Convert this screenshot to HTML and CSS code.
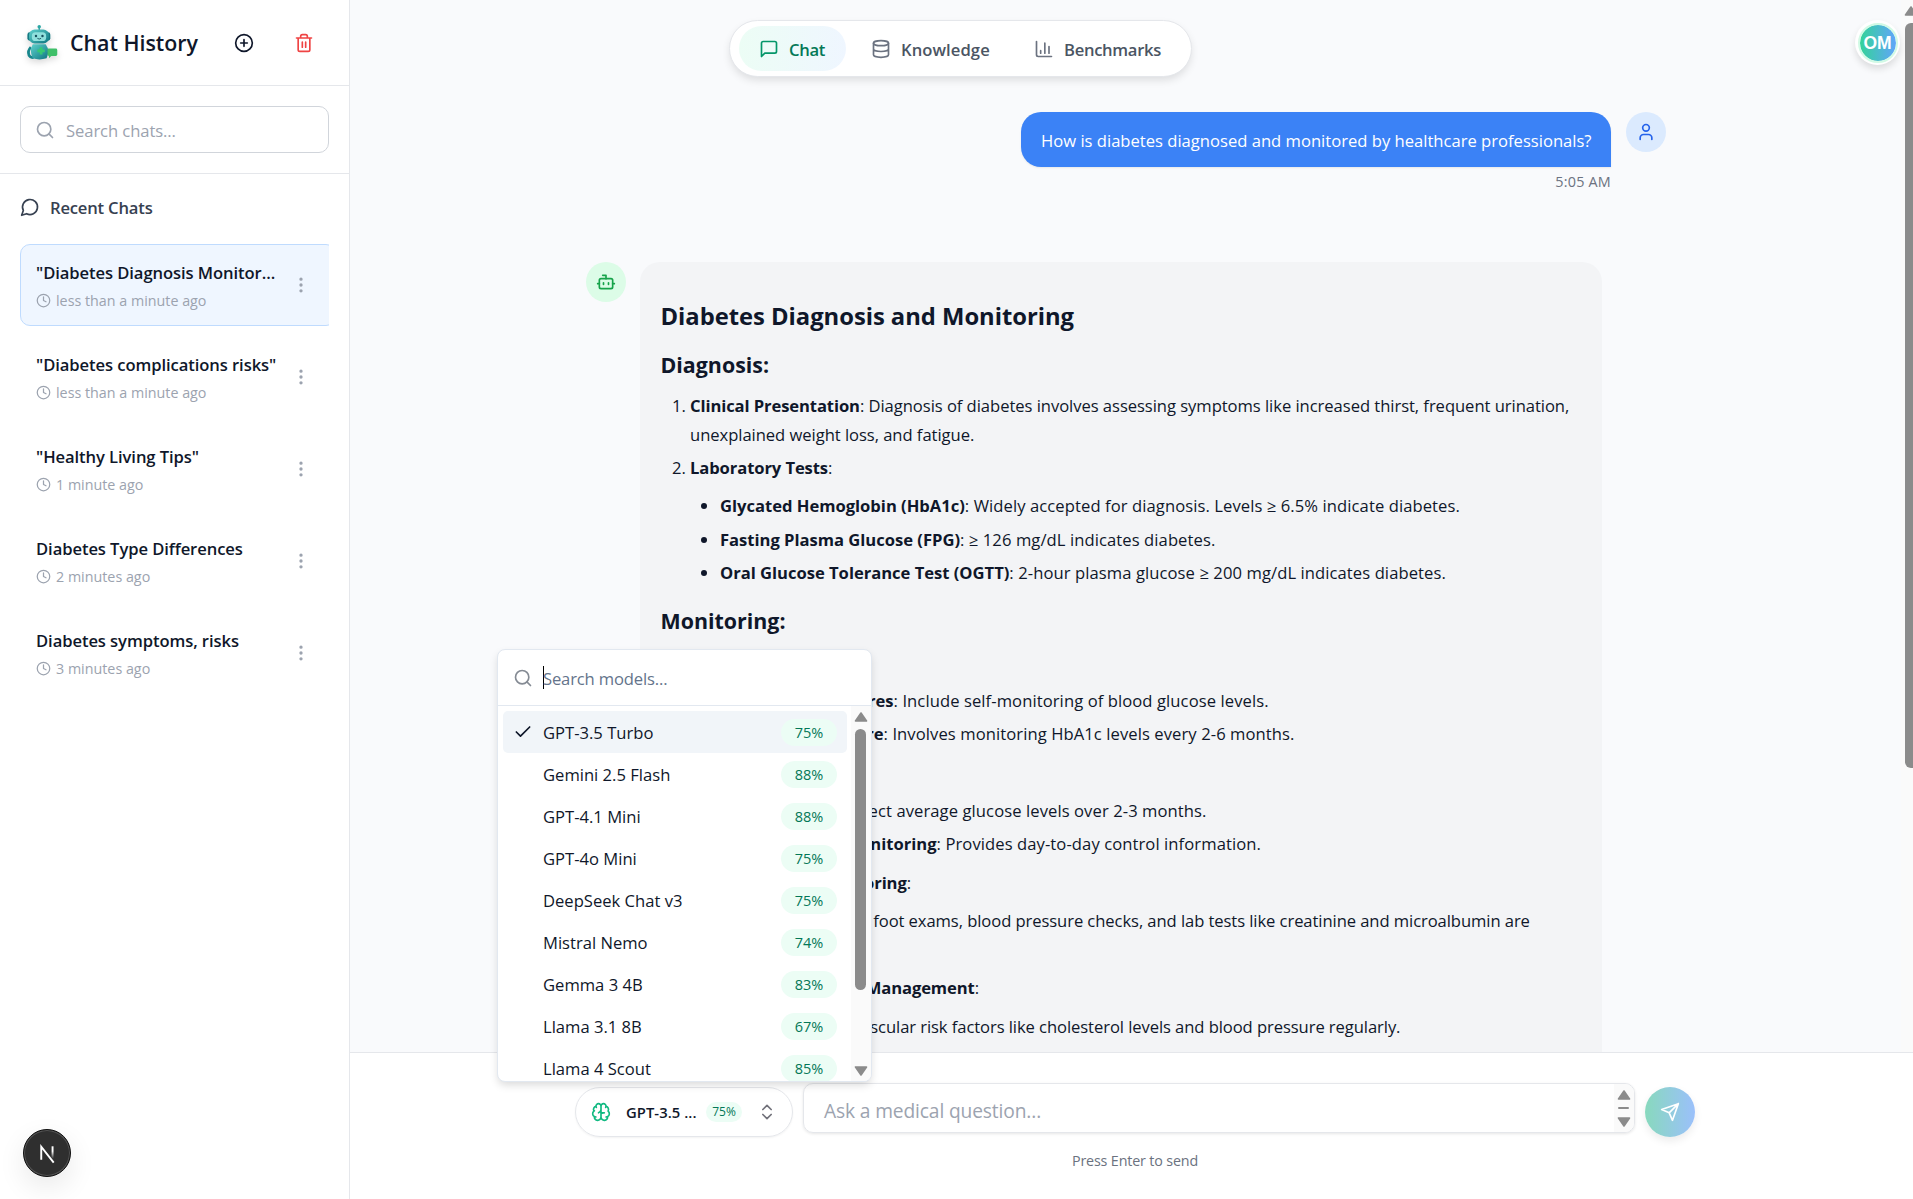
FILE: index.html
```html
<!DOCTYPE html>
<html lang="en">
<head>
<meta charset="utf-8">
<title>Chat History</title>
<link rel="stylesheet" href="styles.css">
</head>
<body>
<svg class="defs" width="0" height="0">
  <symbol id="search" viewBox="0 0 24 24"><circle cx="11" cy="11" r="8"/><path d="m21 21-4.3-4.3"/></symbol>
  <symbol id="clock" viewBox="0 0 24 24"><circle cx="12" cy="12" r="10"/><path d="M12 6v6l4 2"/></symbol>
  <symbol id="dots" viewBox="0 0 24 24"><circle cx="12" cy="12" r="1"/><circle cx="12" cy="5" r="1"/><circle cx="12" cy="19" r="1"/></symbol>
  <symbol id="up" viewBox="0 0 14 10"><path d="M7 1 12.5 9h-11z" fill="#8b8b8b" stroke="#8b8b8b" stroke-width="1.6" stroke-linejoin="round"/></symbol>
</svg>
<div class="app">
  <aside class="sidebar">
    <header class="side-head">
      <svg class="logo" viewBox="0 0 36 40">
        <defs>
          <linearGradient id="teal" x1="0" y1="0" x2="1" y2="1"><stop offset="0" stop-color="#5ed0cb"/><stop offset="1" stop-color="#0d7681"/></linearGradient>
        </defs>
        <path d="M15 7V3" stroke="#218f93" stroke-width="1.4"/><circle cx="15" cy="3" r="1.9" fill="#2aa7a5"/>
        <rect x="2.2" y="9" width="5" height="9" rx="2.5" fill="#147a83"/><rect x="22" y="9" width="5" height="9" rx="2.5" fill="#147a83"/>
        <rect x="4" y="6" width="21.500" height="15" rx="6" fill="url(#teal)"/>
        <rect x="7" y="9" width="15.500" height="9.500" rx="4" fill="#8fe0dc"/>
        <circle cx="11.500" cy="13" r="1.300" fill="#17505e"/><circle cx="18.500" cy="13" r="1.300" fill="#17505e"/><path d="M13 15.500q2 1.600 4 0" stroke="#17505e" fill="none"/>
        <path d="M6 25q-4 4-2 9 2 3 5 2" fill="none" stroke="#17868c" stroke-width="3"/>
        <path d="M8 22h14q5 7 1 15-8 2.500-15 0-4-8 0-15z" fill="url(#teal)"/>
        <path d="M17 25v8M13 29h8" stroke="#35c973" stroke-width="3"/>
        <path d="M25 26.500h8q1.500 0 1.500 1.500v5q0 1.500-1.500 1.500h-5l-2.500 2.500v-2.500q-1.500 0-1.500-1.500V28q0-1.500 1-1.500z" fill="#3fbf69"/>
      </svg>
      <h1>Chat History</h1>
      <svg class="ic add" viewBox="0 0 24 24"><circle cx="12" cy="12" r="10"/><path d="M8 12h8M12 8v8"/></svg>
      <svg class="ic trash" viewBox="0 0 24 24"><path d="M3 6h18M19 6v14c0 1-1 2-2 2H7c-1 0-2-1-2-2V6M8 6V4c0-1 1-2 2-2h4c1 0 2 1 2 2v2M10 11v6M14 11v6"/></svg>
    </header>
    <div class="side-search"><div class="search-box"><svg class="ic"><use href="#search"/></svg><span>Search chats...</span></div></div>
    <section class="recent">
      <h2><svg class="ic" viewBox="0 0 24 24"><path d="M7.900 20A9 9 0 1 0 4 16.100L2 22Z"/></svg>Recent Chats</h2>
      <ul class="chats">
        <li class="chat active"><div><b>"Diabetes Diagnosis Monitor...</b><span><svg class="ic"><use href="#clock"/></svg>less than a minute ago</span></div><svg class="ic more"><use href="#dots"/></svg></li>
        <li class="chat"><div><b>"Diabetes complications risks"</b><span><svg class="ic"><use href="#clock"/></svg>less than a minute ago</span></div><svg class="ic more"><use href="#dots"/></svg></li>
        <li class="chat"><div><b>"Healthy Living Tips"</b><span><svg class="ic"><use href="#clock"/></svg>1 minute ago</span></div><svg class="ic more"><use href="#dots"/></svg></li>
        <li class="chat"><div><b>Diabetes Type Differences</b><span><svg class="ic"><use href="#clock"/></svg>2 minutes ago</span></div><svg class="ic more"><use href="#dots"/></svg></li>
        <li class="chat"><div><b>Diabetes symptoms, risks</b><span><svg class="ic"><use href="#clock"/></svg>3 minutes ago</span></div><svg class="ic more"><use href="#dots"/></svg></li>
      </ul>
    </section>
  </aside>

  <main class="main">
    <div class="thread">
      <div class="msg user">
        <div class="col"><p class="bubble">How is diabetes diagnosed and monitored by healthcare professionals?</p><time>5:05 AM</time></div>
        <div class="who blue"><svg class="ic" viewBox="0 0 24 24"><circle cx="12" cy="7" r="4"/><path d="M19 21v-2a4 4 0 0 0-4-4H9a4 4 0 0 0-4 4v2"/></svg></div>
      </div>
      <div class="msg bot">
        <div class="who green"><svg class="ic" viewBox="0 0 24 24"><path d="M12 8V4H8"/><rect width="16" height="12" x="4" y="8" rx="2"/><path d="M2 14h2M20 14h2M15 13v2M9 13v2"/></svg></div>
        <article class="answer">
          <h2>Diabetes Diagnosis and Monitoring</h2>
          <h3>Diagnosis:</h3>
          <ol>
            <li><strong>Clinical Presentation</strong>: Diagnosis of diabetes involves assessing symptoms like increased thirst, frequent urination, unexplained weight loss, and fatigue.</li>
            <li><strong>Laboratory Tests</strong>:
              <ul>
                <li><strong>Glycated Hemoglobin (HbA1c)</strong>: Widely accepted for diagnosis. Levels ≥ 6.5% indicate diabetes.</li>
                <li><strong>Fasting Plasma Glucose (FPG)</strong>: ≥ 126 mg/dL indicates diabetes.</li>
                <li><strong>Oral Glucose Tolerance Test (OGTT)</strong>: 2-hour plasma glucose ≥ 200 mg/dL indicates diabetes.</li>
              </ul>
            </li>
          </ol>
          <h3 class="second">Monitoring:</h3>
          <ol>
            <li><strong>Goals</strong>:
              <ul>
                <li><span class="lead w1"><strong>Self-Care Measures</strong>:</span> Include self-monitoring of blood glucose levels.</li>
                <li><span class="lead w2"><strong>Professional Care</strong>:</span> Involves monitoring HbA1c levels every 2-6 months.</li>
              </ul>
            </li>
            <li><strong>Methods</strong>:
              <ul>
                <li><span class="lead w3"><strong>HbA1c Tests</strong>: Reflect</span> average glucose levels over 2-3 months.</li>
                <li><span class="lead w4"><strong>Blood Sugar Monitoring</strong>:</span> Provides day-to-day control information.</li>
              </ul>
            </li>
            <li><span class="lead w5"><strong>Clinical Monitoring</strong>:</span>
              <ul class="tight">
                <li><span class="lead w6">Annual eye and</span> foot exams, blood pressure checks, and lab tests like creatinine and microalbumin are<br>recommended.</li>
              </ul>
            </li>
            <li><span class="lead w7"><strong>Cardiovascular Risk Management</strong>:</span>
              <ul class="tight">
                <li><span class="lead w8">Assess cardiovascular</span> risk factors like cholesterol levels and blood pressure regularly.</li>
              </ul>
            </li>
          </ol>
        </article>
      </div>
    </div>
    <div class="page-track"><svg class="arrow"><use href="#up"/></svg><i></i></div>

    <footer class="composer">
      <div class="row">
        <div class="select">
          <svg class="ic brain" viewBox="0 0 24 24"><path d="M12 5a3 3 0 1 0-5.997.125 4 4 0 0 0-2.526 5.770 4 4 0 0 0 .556 6.588A4 4 0 1 0 12 18ZM12 5a3 3 0 1 1 5.997.125 4 4 0 0 1 2.526 5.770 4 4 0 0 1-.556 6.588A4 4 0 1 1 12 18ZM9 13a4.500 4.500 0 0 0 3-4M6 5.125A3 3 0 0 0 6.400 6.500M3.480 10.900a4 4 0 0 1 .580-.400M6 18a4 4 0 0 1-1.970-.520M12 13h4M12 13a4.500 4.500 0 0 0 3 0M18 5.125a3 3 0 0 1-.400 1.375M18 18a4 4 0 0 0 1.970-.520"/></svg>
          <b>GPT-3.5 ...</b><em>75%</em>
          <svg class="ic chev" viewBox="0 0 24 24"><path d="m7 15 5 5 5-5M7 9l5-5 5 5"/></svg>
        </div>
        <div class="ask"><span>Ask a medical question...</span><div class="mini"><svg class="arrow"><use href="#up"/></svg><i></i><svg class="arrow down"><use href="#up"/></svg></div></div>
        <div class="send"><svg class="ic" viewBox="0 0 24 24"><path d="M22 2 15 22l-4-9-9-4ZM22 2 11 13"/></svg></div>
      </div>
      <p>Press Enter to send</p>
    </footer>

    <nav class="tabs">
      <a class="on"><svg class="ic" viewBox="0 0 24 24"><path d="M21 15a2 2 0 0 1-2 2H7l-4 4V5a2 2 0 0 1 2-2h14a2 2 0 0 1 2 2z"/></svg><span>Chat</span></a>
      <a class="k"><svg class="ic" viewBox="0 0 24 24"><ellipse cx="12" cy="5" rx="9" ry="3"/><path d="M3 5v14a9 3 0 0 0 18 0V5M3 12a9 3 0 0 0 18 0"/></svg><span>Knowledge</span></a>
      <a class="m"><svg class="ic" viewBox="0 0 24 24"><path d="M3 3v16a2 2 0 0 0 2 2h16M18 17V9M13 17V5M8 17v-3"/></svg><span>Benchmarks</span></a>
    </nav>
    <div class="me"><span>OM</span></div>

    <div class="popup">
      <div class="find"><svg class="ic"><use href="#search"/></svg><i class="caret"></i><span>Search models...</span></div>
      <div class="scroll">
        <ul>
          <li class="sel"><svg class="ic" viewBox="0 0 24 24"><path d="M20 6 9 17l-5-5"/></svg><span>GPT-3.5 Turbo</span><em>75%</em></li>
          <li><span>Gemini 2.5 Flash</span><em>88%</em></li>
          <li><span>GPT-4.1 Mini</span><em>88%</em></li>
          <li><span>GPT-4o Mini</span><em>75%</em></li>
          <li><span>DeepSeek Chat v3</span><em>75%</em></li>
          <li><span>Mistral Nemo</span><em>74%</em></li>
          <li><span>Gemma 3 4B</span><em>83%</em></li>
          <li><span>Llama 3.1 8B</span><em>67%</em></li>
          <li><span>Llama 4 Scout</span><em>85%</em></li>
        </ul>
        <div class="track"><svg class="arrow"><use href="#up"/></svg><i></i><svg class="arrow down"><use href="#up"/></svg></div>
      </div>
    </div>
  </main>
</div>
<div class="dev"><svg viewBox="0 0 48 48"><defs><linearGradient id="fa" x1="0" y1="0" x2="0" y2="1"><stop offset=".4" stop-color="#fff"/><stop offset="1" stop-color="#fff" stop-opacity="0"/></linearGradient></defs><path d="M18 31V17.500L31 34" fill="none" stroke="#fff" stroke-width="2"/><rect x="28.800" y="17" width="2" height="13" fill="url(#fa)"/></svg></div>
</body>
</html>
```
FILE: styles.css
```css
* { box-sizing: border-box; margin: 0; padding: 0; }
body { width: 1913px; height: 1199px; overflow: hidden; background: #fff; color: #0f172a; font-family: "Open Sans", "Noto Sans", sans-serif; font-size: 16.6px; letter-spacing: 0; }
ul, ol { list-style: none; }
em { font-style: normal; }
.defs { position: absolute; }
.ic { width: 20px; height: 20px; flex: none; fill: none; stroke: currentColor; stroke-width: 2; stroke-linecap: round; stroke-linejoin: round; }
.arrow { width: 14px; height: 10px; flex: none; }
.down { transform: rotate(180deg); }
.app { display: grid; grid-template-columns: 350px 1fr; height: 1199px; }

.sidebar { border-right: 1px solid #e5e7eb; background: #fff; }
.side-head { height: 86px; display: flex; align-items: center; padding-left: 25px; border-bottom: 1px solid #e5e7eb; }
.logo { width: 34px; height: 37px; filter: drop-shadow(0 3px 3px rgba(0,0,0,.15)); }
.side-head h1 { width: 164px; margin-left: 11px; font-size: 21.4px; font-weight: 600; letter-spacing: -0.02px; white-space: nowrap; }
.trash { margin-left: 40px; color: #ef4444; }
.side-search { height: 88px; padding: 20px 20px 0; border-bottom: 1px solid #e5e7eb; }
.search-box { height: 47px; border: 1px solid #d1d5db; border-radius: 10px; display: flex; align-items: center; gap: 11px; padding-left: 14px; color: #9ca3af; }
.search-box span { padding-top: 1px; letter-spacing: -0.08px; }
.recent { padding: 20px 20px 0; overflow: hidden; }
.recent h2 { display: flex; align-items: center; gap: 10px; height: 26px; font-size: 16.6px; font-weight: 600; letter-spacing: -0.18px; color: #374151; }
.chats { margin-top: 24px; display: grid; gap: 10px; overflow: hidden; }
.chat { width: 316px; height: 82px; display: flex; align-items: center; border: 1px solid transparent; border-radius: 10px; padding: 0 18px 0 15px; }
.chat.active { background: #eff6ff; border-color: #bfdbfe; }
.chat div { flex: 1; display: grid; gap: 2px; padding-top: 2px; }
.chat b { font-weight: 600; line-height: 26px; letter-spacing: -0.08px; white-space: nowrap; }
.chat span { display: flex; align-items: center; gap: 5px; font-size: 14.3px; line-height: 25px; color: #9ca3af; }
.chat span .ic { width: 15px; height: 15px; }
.more { color: #9ca3af; margin-right: 6px; }

.main { position: relative; display: grid; grid-template-columns: 1fr 12px; grid-template-rows: 1052px 147px; background: #f9fafb; }
.thread { overflow: hidden; padding: 112px 235px 0 236px; background: #f9fafc; }
.msg { display: flex; }
.user { justify-content: flex-end; gap: 15px; height: 150px; }
.user .col { display: flex; flex-direction: column; align-items: flex-end; }
.bubble { width: 590px; height: 55px; line-height: 57px; padding-left: 20px; background: #3b82f6; color: #fff; border-radius: 20px 20px 0 20px; box-shadow: 0 1px 2px rgba(0,0,0,.08); white-space: nowrap; }
time { margin-top: 5px; font-size: 14.4px; line-height: 20px; letter-spacing: 0.2px; color: #6b7280; }
.who { width: 40px; height: 40px; flex: none; border-radius: 50%; display: grid; place-items: center; }
.blue { background: #dbeafe; color: #2563eb; }
.green { background: #dcfce7; color: #16a34a; }
.bot { gap: 14px; }
.answer { width: 962px; height: 900px; padding: 36px 16px 0 20.5px; border-radius: 20px; background: #f3f4f6; line-height: 28.3px; letter-spacing: -0.05px; }
.answer h2 { font-size: 23.8px; line-height: 36px; letter-spacing: -0.03px; }
.answer h3 { font-size: 21.4px; line-height: 32px; margin: 15px 0 11.4px; letter-spacing: 0; }
.answer h3.second { margin-top: 17.3px; }
.answer ol { list-style: decimal; padding-left: 29.5px; }
.answer ul { list-style: disc; padding-left: 30px; margin: 10px 0; letter-spacing: 0.08px; }
.answer ul.tight { letter-spacing: -0.08px; margin-top: 10.6px; }
.answer li { margin-bottom: 5.2px; }
.answer li li { white-space: nowrap; }
.lead { display: inline-block; text-align: right; white-space: nowrap; }
.w1 { width: 178px; } .w2 { width: 168px; } .w3 { width: 172px; } .w4 { width: 221px; }
.w5 { width: 221px; } .w6 { width: 149px; } .w7 { width: 289px; } .w8 { width: 196px; }
strong { font-weight: 700; letter-spacing: -0.1px; }
li li strong { letter-spacing: -0.02px; }
.page-track { background: #fafafa; overflow: hidden; padding: 6px 0 0 2px; }
.page-track i { display: block; width: 16px; height: 745px; margin: 7px 0 0 2px; border-radius: 6px; background: #8b8b8b; }
.page-track .arrow { display: block; margin-left: 1px; }

.composer { grid-column: 1 / -1; background: #fff; border-top: 1px solid #e5e7eb; padding: 30px 0 0 225px; }
.row { display: flex; align-items: flex-start; }
.select { width: 218px; height: 50px; margin-top: 4px; border: 1px solid #e5e7eb; border-radius: 25px; display: flex; align-items: center; padding-left: 15px; box-shadow: 0 1px 2px rgba(0,0,0,.05); }
.brain { color: #10b981; }
.select b { width: 80px; margin-left: 15px; font-weight: 600; font-size: 14.8px; letter-spacing: 0.05px; white-space: nowrap; }
.select em { width: 36px; height: 20px; border-radius: 10px; background: #ecfdf5; color: #047857; font-size: 12px; font-weight: 500; line-height: 20px; text-align: center; }
.chev { margin-left: 15px; color: #71717a; }
.ask { width: 832px; height: 50px; margin-left: 10px; border: 1px solid #e5e7eb; border-radius: 10px; display: flex; justify-content: space-between; overflow: hidden; box-shadow: 0 1px 3px rgba(0,0,0,.1); color: #9ca3af; font-size: 19.2px; line-height: 53px; padding-left: 20px; letter-spacing: -0.13px; }
.mini { width: 20px; background: #fafafa; display: flex; flex-direction: column; align-items: center; padding: 6px 1px 0 0; }
.mini i { width: 11px; height: 2px; margin: 7px 0 8px; background: #8b8b8b; border-radius: 1px; }
.send { width: 50px; height: 50px; margin: 4px 0 0 10px; border-radius: 50%; display: grid; place-items: center; color: #fff; background: linear-gradient(90deg, #88d9bd, #9bc0fb); box-shadow: 0 4px 8px rgba(0,0,0,.08); }
.composer p { width: 200px; margin: 13px 0 0 460px; line-height: 22px; text-align: center; font-size: 14.3px; color: #6b7280; letter-spacing: -0.15px; }

.tabs { position: absolute; left: 379px; top: 20px; width: 463px; height: 57px; border: 1px solid #e5e7eb; border-radius: 29px; background: #fff; display: flex; gap: 5px; padding: 5px 9px; box-shadow: 0 4px 8px -1px rgba(0,0,0,.12); }
.tabs a { height: 45px; display: flex; align-items: center; gap: 10px; padding-left: 20px; border-radius: 23px; font-weight: 600; letter-spacing: -0.3px; color: #4b5563; white-space: nowrap; }
.tabs span { padding-top: 1px; }
.tabs .ic { color: #6b7280; }
.tabs .on { width: 107px; color: #047857; background: linear-gradient(90deg, #ecfdf5, #eff6ff); }
.tabs .on .ic { color: #059669; }
.tabs .k { width: 158px; letter-spacing: 0.08px; }
.tabs .m { width: 166px; }
.me { position: absolute; left: 1505px; top: 20px; width: 45px; height: 45px; border-radius: 50%; background: #fff; padding: 2.5px; box-shadow: 0 4px 7px rgba(0,0,0,.12); }
.me span { display: grid; place-items: center; width: 40px; height: 40px; padding-top: 2px; border: 2px solid #d1fae5; border-radius: 50%; background: linear-gradient(90deg, #34d399, #60a5fa) padding-box; color: #fff; font: 700 17.5px "Liberation Sans", sans-serif; }

.popup { position: absolute; left: 147px; top: 649px; width: 375px; height: 433px; border: 1px solid #e2e8f0; border-radius: 8px; background: #fff; overflow: hidden; box-shadow: 0 4px 8px -1px rgba(0,0,0,.15); }
.find { height: 56px; display: flex; align-items: center; padding-left: 15px; border-bottom: 1px solid #e2e8f0; color: #64748b; }
.find .ic { color: #858b94; margin-right: 10px; }
.find span { margin-left: -1px; padding-top: 1px; letter-spacing: -0.15px; }
.caret { width: 1px; height: 23px; background: #000; }
.scroll { display: flex; height: 376px; }
.scroll ul { flex: 1; padding: 5px 4px 0 5px; }
.scroll li { height: 42px; display: flex; align-items: center; padding: 0 10px 0 40px; }
.scroll li span { padding-top: 1px; }
.scroll li.sel { background: #f1f5f9; border-radius: 5px; padding-left: 10px; }
.sel .ic { margin-right: 10px; }
.scroll em { margin-left: auto; width: 56px; height: 27px; border-radius: 14px; background: #ecfdf5; color: #047857; font-size: 14.5px; font-weight: 500; line-height: 27px; text-align: center; }
.track { width: 20px; background: #fafafa; display: flex; flex-direction: column; align-items: center; padding: 6px 1px 0 0; }
.track i { width: 11px; height: 261px; margin: 7px 0 76px; border-radius: 6px; background: #8b8b8b; }
.dev { position: absolute; left: 23px; top: 1129px; width: 48px; height: 48px; border-radius: 50%; background: #2f2f2f; border: 1px solid #111; box-shadow: inset 0 0 0 1px #555, 0 10px 28px rgba(0,0,0,.09); }
.dev svg { width: 46px; height: 46px; }
```
